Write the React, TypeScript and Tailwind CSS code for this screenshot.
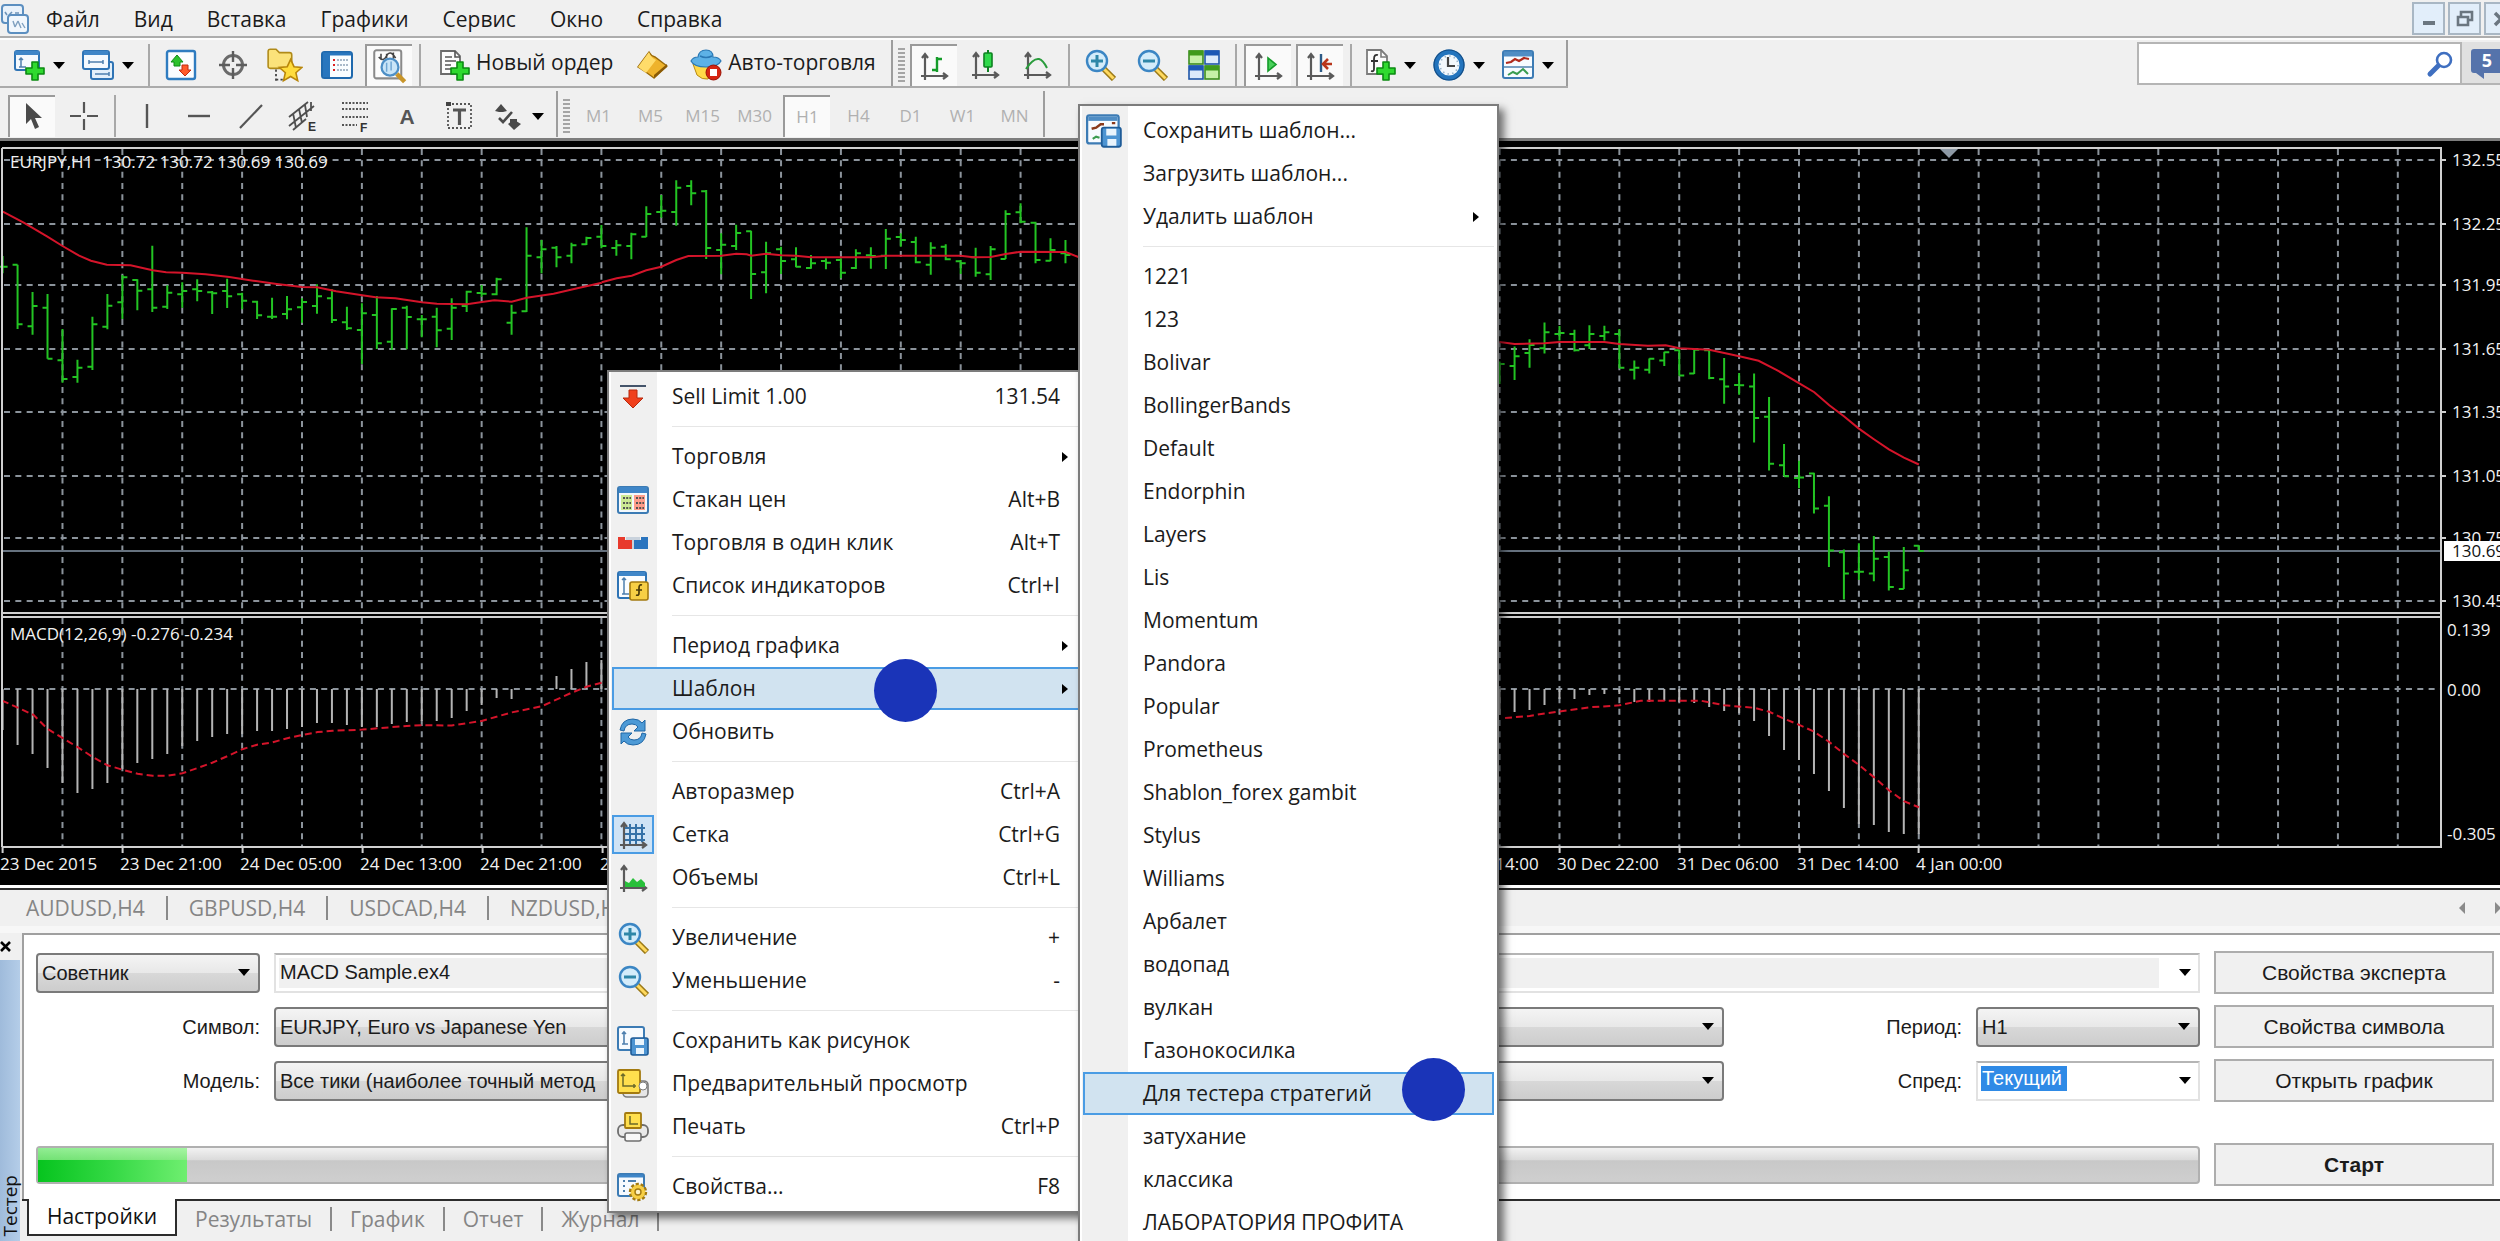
import type { ReactNode } from "react";

/* ------------------------------------------------------------------ */
/* Icons                                                              */
/* ------------------------------------------------------------------ */

function Svg({ children, className = "size-8" }: { children: ReactNode; className?: string }) {
  return (
    <svg viewBox="0 0 32 32" className={className + " shrink-0"} fill="none" aria-hidden="true">
      {children}
    </svg>
  );
}

const Down = () => (
  <svg viewBox="0 0 12 7" className="h-[7px] w-3 shrink-0" aria-hidden="true">
    <path d="M0 0h12L6 7z" fill="#000" />
  </svg>
);

const Plus = () => (
  <path d="M19 13h6v6h6v6h-6v6h-6v-6h-6v-6h6z" fill="#2fd92f" stroke="#0b8a12" strokeWidth="1.6" strokeLinejoin="round" />
);

const NewChartIcon = () => (
  <Svg>
    <rect x="2" y="2" width="24" height="19" rx="2" fill="#f4f9fe" stroke="#2f74b5" strokeWidth="2" />
    <path d="M2 4h24" stroke="#3f86c8" strokeWidth="4" />
    <path d="M8 9v9M6 11l2-2 2 2M6 18h7" stroke="#4d7fae" strokeWidth="1.5" />
    <Plus />
  </Svg>
);
const ProfilesIcon = () => (
  <Svg>
    <rect x="9" y="13" width="22" height="17" rx="2" fill="#e3f0fa" stroke="#2f74b5" strokeWidth="2" />
    <rect x="1" y="2" width="26" height="18" rx="2" fill="#f4f9fe" stroke="#2f74b5" strokeWidth="2" />
    <path d="M2 4h24" stroke="#3f86c8" strokeWidth="4" />
    <path d="M7 13h14M7 11v4M21 11v4M13 25h14M27 23v4" stroke="#4d7fae" strokeWidth="1.5" />
  </Svg>
);
const MarketWatchIcon = () => (
  <Svg>
    <rect x="2" y="2" width="28" height="28" rx="2" fill="#fbfdff" stroke="#2f7cc0" strokeWidth="2.4" />
    <path d="M6 13l6-7 6 7h-3v4H9v-4z" fill="#2cc22c" stroke="#0f8a16" />
    <path d="M14 21l6 6 6-6h-3v-5h-6v5z" fill="#ff5a2a" stroke="#c02a10" />
  </Svg>
);
const CrosshairIcon = () => (
  <Svg>
    <circle cx="16" cy="16" r="9.5" stroke="#6a6a6a" strokeWidth="3" />
    <path d="M16 2v11M16 19v11M2 16h11M19 16h11" stroke="#5d5d5d" strokeWidth="2.4" />
  </Svg>
);
const NavigatorIcon = () => (
  <Svg className="size-9">
    <path d="M1 4q0-2 2-2h5l3 3h9q2 0 2 2v10q0 2-2 2H3q-2 0-2-2z" fill="#fbe27a" stroke="#b08a18" strokeWidth="1.4" />
    <path d="M8 20v10M8 29h6" stroke="#444" strokeWidth="1.6" strokeDasharray="2 2" />
    <path d="M21 11l3 6.5 7 .7-5.300 4.700 1.600 7-6.300-3.700-6.300 3.700 1.600-7-5.300-4.700 7-.7z" fill="#ffdc3c" stroke="#b8860b" strokeWidth="1.4" />
  </Svg>
);
const DataWindowIcon = () => (
  <Svg>
    <rect x="1" y="3" width="30" height="26" rx="2.500" fill="#fafdff" stroke="#1f69ad" strokeWidth="2" />
    <path d="M2 4h7v24H2z" fill="#2876be" />
    <path d="M2 5h28" stroke="#2876be" strokeWidth="3" />
    <path d="M12 11h2M12 16h2M12 21h2" stroke="#d22" strokeWidth="2" />
    <path d="M16 11h12M16 16h12M16 21h12" stroke="#8fa3b8" strokeWidth="1.4" strokeDasharray="2 1" />
  </Svg>
);
const TesterIcon = () => (
  <Svg className="size-9">
    <rect x="2" y="2" width="24" height="25" rx="2" fill="#fcfcfc" stroke="#8a8a8a" strokeWidth="1.8" />
    <path d="M6 8q4 5 7-1t8 2M8 5v5M13 5v4M19 4v6" stroke="#444" strokeWidth="1.4" />
    <circle cx="16" cy="17" r="7.500" fill="#bfe0f7" fillOpacity=".85" stroke="#4d8fc6" strokeWidth="2" />
    <path d="M13 13v8M17 12v8" stroke="#6fa6d3" strokeWidth="1.300" />
    <path d="M22 23l7 7" stroke="#c8952a" strokeWidth="4" />
  </Svg>
);
const NewOrderIcon = () => (
  <Svg>
    <path d="M3 2h14l5 5v18H3z" fill="#fcfcfc" stroke="#6b6b6b" strokeWidth="1.800" />
    <path d="M17 2v6h5M7 8h7M7 12h11M7 16h6M7 20h6" stroke="#555" strokeWidth="1.600" />
    <Plus />
  </Svg>
);
const BookIcon = () => (
  <Svg>
    <path d="M2 18L13 3q2 4 6 5l12 9-13 12q-8-6-16-11z" fill="#eeb32c" stroke="#9a6a08" strokeWidth="1.400" />
    <path d="M13 3q2 6 7 8l-10 13-8-6z" fill="#ffdc6a" />
    <path d="M18 29v-3l13-11v3z" fill="#8a5a06" />
  </Svg>
);
const AutoTradeIcon = () => (
  <Svg>
    <path d="M3 15l4 11q5 5 11 4l9-15z" fill="#ffd948" stroke="#b98a12" />
    <path d="M1 12q2-4 7-4 1-7 8-7t7 7q6 0 8 4-3 6-15 6T1 12z" fill="#5db1e6" stroke="#2a78b4" strokeWidth="1.200" />
    <path d="M10 7q6 3 12 0" stroke="#2a78b4" strokeWidth="1.400" />
    <circle cx="23.500" cy="23.500" r="7.500" fill="#d62412" stroke="#9b1206" />
    <rect x="20" y="20" width="7" height="7" fill="#fff" />
  </Svg>
);
const Axes = () => (
  <path d="M7 4v26M3 26h26M4 8l3-4 3 4M25 23l4 3-4 3" stroke="#5a5a5a" strokeWidth="2.200" />
);
const BarsIcon = () => (
  <Svg><Axes /><path d="M19 7v15M19 9h5M14 20h5" stroke="#159c2a" strokeWidth="2.400" /></Svg>
);
const CandlesIcon = () => (
  <Svg><Axes /><path d="M19 1v22" stroke="#0d8020" strokeWidth="2" /><rect x="15" y="4" width="8" height="14" rx="1" fill="#2fd94a" stroke="#0d8020" strokeWidth="1.600" /></Svg>
);
const LineIcon = () => (
  <Svg><Axes /><path d="M5 20q7-11 13-10 4 1 8 9" stroke="#2a9c3c" strokeWidth="2" /></Svg>
);
const Lens = ({ minus }: { minus?: boolean }) => (
  <Svg>
    <path d="M19 19l11 11" stroke="#9c7a17" strokeWidth="6" />
    <path d="M19.500 19.500l10 10" stroke="#ffd95e" strokeWidth="3" />
    <circle cx="13" cy="12" r="10" fill="#d4ecfa" stroke="#3b86c4" strokeWidth="2.400" />
    <path d={minus ? "M7 12h12" : "M7 12h12M13 6v12"} stroke="#2f87a8" strokeWidth="3" />
  </Svg>
);
const TilesIcon = () => (
  <Svg>
    <rect x="1" y="2" width="14" height="13" fill="#c6f0a8" stroke="#3c8d1e" strokeWidth="1.600" />
    <rect x="17" y="2" width="14" height="13" fill="#dceafb" stroke="#1f55a8" strokeWidth="1.600" />
    <rect x="1" y="17" width="14" height="13" fill="#dceafb" stroke="#1f55a8" strokeWidth="1.600" />
    <rect x="17" y="17" width="14" height="13" fill="#c6f0a8" stroke="#3c8d1e" strokeWidth="1.600" />
    <path d="M1 4h14M17 19h14" stroke="#3f9a1c" strokeWidth="5" />
    <path d="M17 4h14M1 19h14" stroke="#1d58b5" strokeWidth="5" />
  </Svg>
);
const ScrollIcon = () => (
  <Svg><Axes /><path d="M16 8v13l8-6.500z" fill="#49d05a" stroke="#159c2a" strokeWidth="1.600" /></Svg>
);
const ShiftIcon = () => (
  <Svg><Axes /><path d="M17 4v18" stroke="#2c5a86" strokeWidth="2.400" /><path d="M28 14h-8M24 9l-5 5 5 5" stroke="#b8361c" strokeWidth="2.600" /></Svg>
);
const IndicatorsIcon = () => (
  <Svg>
    <path d="M3 1h14l6 6v18H3z" fill="#fcfcfc" stroke="#7b7b7b" strokeWidth="1.800" />
    <path d="M17 1v7h6" stroke="#7b7b7b" strokeWidth="1.600" />
    <path d="M14 6q-4-1-4 4v10q0 3-3 2M7 12h7" stroke="#333" strokeWidth="1.800" />
    <Plus />
  </Svg>
);
const ClockIcon = () => (
  <Svg>
    <circle cx="16" cy="16" r="13" fill="#f3f8fc" stroke="#2374bd" strokeWidth="5" />
    <circle cx="16" cy="16" r="15" stroke="#154e86" strokeWidth="1.200" />
    <path d="M15 8v9h7" stroke="#444" strokeWidth="2.200" />
    <circle cx="16" cy="16" r="9" stroke="#9ab4cb" strokeWidth="1.600" strokeDasharray="1.500 3.200" />
  </Svg>
);
const TemplateIcon = () => (
  <Svg>
    <rect x="1" y="2" width="30" height="27" rx="2" fill="#f7fbff" stroke="#3c7bb4" strokeWidth="2" />
    <path d="M2 5h28" stroke="#4f8dc4" strokeWidth="5" />
    <path d="M2 18h28" stroke="#5b8ab5" strokeWidth="1.600" />
    <path d="M4 14l5-1 4-3 4 2 5-3 5 1" stroke="#b02a1c" strokeWidth="2.200" />
    <path d="M6 26l5-3 4 2 6-5 5 5" stroke="#3a9c50" strokeWidth="2" />
  </Svg>
);
const CursorIcon = () => (
  <Svg><path d="M9 2v21l5-5 4 10 4-2-4-9h7z" fill="#4a4a4a" /></Svg>
);
const CrossIcon = () => (
  <Svg><path d="M16 2v11M16 19v11M2 16h11M19 16h11" stroke="#555" strokeWidth="2.200" /></Svg>
);
const VLineIcon = () => <Svg><path d="M16 4v24" stroke="#555" strokeWidth="2.400" /></Svg>;
const HLineIcon = () => <Svg><path d="M5 16h22" stroke="#555" strokeWidth="2.400" /></Svg>;
const TrendIcon = () => <Svg><path d="M5 28L27 5" stroke="#555" strokeWidth="2.200" /></Svg>;
const ChannelIcon = () => (
  <Svg>
    <path d="M2 17L21 2M2 26L27 6M6 30l13-11M6 13l3 15M12 9l3 14M18 5l2 12M24 2v9" stroke="#4f4f4f" strokeWidth="1.800" />
    <text x="21" y="31" fontSize="12" fontWeight="700" fill="#333" fontFamily="Liberation Sans, sans-serif">E</text>
  </Svg>
);
const FiboIcon = () => (
  <Svg>
    <path d="M3 3h26M3 9h26M3 17h26M3 25h15" stroke="#555" strokeWidth="2" strokeDasharray="2 1.500" />
    <text x="21" y="32" fontSize="12" fontWeight="700" fill="#333" fontFamily="Liberation Sans, sans-serif">F</text>
  </Svg>
);
const TextIcon = () => (
  <Svg><text x="16" y="24" textAnchor="middle" fontSize="21" fontWeight="700" fill="#555" fontFamily="Liberation Sans, sans-serif">A</text></Svg>
);
const LabelIcon = () => (
  <Svg>
    <rect x="5" y="4" width="23" height="24" stroke="#555" strokeWidth="1.800" strokeDasharray="2 2" />
    <path d="M3 2h5v4H3z" fill="#444" />
    <path d="M10 10h13M16.500 10v15" stroke="#555" strokeWidth="3.200" />
  </Svg>
);
const ArrowsIcon = () => (
  <Svg>
    <path d="M3 11l6-7 6 7-4 1H7z" fill="#4a4a4a" />
    <path d="M16 24l6 6 7-6-5-3h-4z" fill="#4a4a4a" />
    <path d="M7 18l4 4 9-10" stroke="#4a4a4a" strokeWidth="2.600" />
    <path d="M18 19h7v5h-7z" fill="#4a4a4a" />
  </Svg>
);

/* Menu icons */
const SellLimitIcon = () => (
  <Svg>
    <path d="M3 5h26" stroke="#44546a" strokeWidth="2" />
    <path d="M12 9h8v8h6L16 27 6 17h6z" fill="#f0401c" stroke="#b8280c" />
  </Svg>
);
const DepthIcon = () => (
  <Svg>
    <rect x="1" y="3" width="30" height="26" rx="2" fill="#f3f8fc" stroke="#3c7bb4" strokeWidth="2" />
    <path d="M2 6h28" stroke="#3f86c8" strokeWidth="6" />
    <path d="M4 11h11v15H4z" fill="#cdeb94" />
    <path d="M17 11h11v15H17z" fill="#ff9d8a" />
    <path d="M6 14h8M6 19h8M6 24h8M19 14h8M19 19h8M19 24h8" stroke="#555" strokeWidth="2" strokeDasharray="2 1.200" />
  </Svg>
);
const OneClickIcon = () => (
  <Svg>
    <path d="M1 10h7v3h7v9H1z" fill="#e83a2c" />
    <path d="M31 10h-7v3h-7v9h14z" fill="#2a74be" />
    <path d="M9 10h14v3H9zM15 13h2v9h-2z" fill="#c9d2dc" />
  </Svg>
);
const IndicatorListIcon = () => (
  <Svg>
    <rect x="1" y="2" width="28" height="26" rx="2" fill="#fbfdff" stroke="#2f74b5" strokeWidth="2" />
    <path d="M2 4h26" stroke="#3f86c8" strokeWidth="4" />
    <path d="M7 8v16M5 10l2-2 2 2M5 24h7" stroke="#4d7fae" strokeWidth="1.500" />
    <rect x="13" y="12" width="18" height="18" rx="2" fill="#f7cf45" stroke="#a37a10" strokeWidth="1.600" />
    <path d="M25 15q-3-1-3 3v5q0 3-3 2M19 20h6" stroke="#4a3a08" strokeWidth="1.700" />
  </Svg>
);
const RefreshIcon = () => (
  <Svg>
    <path d="M3 14Q5 3 16 3q6 0 9 4l3-3v11H17l4-4q-2-3-6-3-7 0-8 7z" fill="#4d9ad6" stroke="#1f66a5" />
    <path d="M29 18q-2 11-13 11-6 0-9-4l-3 3V17h11l-4 4q2 3 6 3 7 0 8-7z" fill="#4d9ad6" stroke="#1f66a5" />
  </Svg>
);
const GridIcon = () => (
  <Svg><Axes /><path d="M13 5v20M19 5v20M25 5v18M8 9h20M8 15h20M8 21h20" stroke="#3572a8" strokeWidth="2" /></Svg>
);
const VolumesIcon = () => (
  <Svg><Axes /><path d="M8 25v-6l4 2 4-5 4 4 4-3 4 4v4z" fill="#28c03a" /></Svg>
);
const Floppy = () => (
  <>
    <rect x="14" y="13" width="17" height="17" rx="2" fill="#4d94d2" stroke="#1f5c98" strokeWidth="1.600" />
    <path d="M18 14h9v6h-9zM19 23h8v6h-8z" fill="#eaf4fc" />
  </>
);
const SavePictureIcon = () => (
  <Svg>
    <rect x="1" y="2" width="26" height="23" rx="2" fill="#f6fafe" stroke="#3c7bb4" strokeWidth="2" />
    <path d="M7 7v12M5 9l2-2 2 2M5 19h6" stroke="#4d7fae" strokeWidth="1.600" />
    <Floppy />
  </Svg>
);
const PreviewIcon = () => (
  <Svg>
    <rect x="6" y="13" width="25" height="16" rx="4" fill="#e6e6e6" stroke="#7b7b7b" strokeWidth="1.600" />
    <rect x="1" y="2" width="22" height="23" rx="1.500" fill="#ffdf4e" stroke="#a37a10" strokeWidth="1.800" />
    <path d="M6 6v12h13M4 8l2-2 2 2M17 16v4" stroke="#6b6a2a" strokeWidth="1.500" />
    <circle cx="26" cy="18" r="4" fill="#fff" stroke="#7b7b7b" />
  </Svg>
);
const PrintIcon = () => (
  <Svg>
    <rect x="1" y="14" width="30" height="12" rx="5" fill="#e9e9e9" stroke="#6f6f6f" strokeWidth="1.800" />
    <rect x="8" y="2" width="16" height="15" rx="1" fill="#ffdf4e" stroke="#a37a10" strokeWidth="1.800" />
    <path d="M13 5v8h8" stroke="#6b6a2a" strokeWidth="1.500" />
    <rect x="8" y="22" width="16" height="8" rx="2" fill="#f8f8f8" stroke="#6f6f6f" strokeWidth="1.600" />
  </Svg>
);
const PropertiesIcon = () => (
  <Svg>
    <rect x="1" y="3" width="26" height="22" rx="2" fill="#f6fafe" stroke="#3c7bb4" strokeWidth="2" />
    <path d="M2 5h24" stroke="#3f86c8" strokeWidth="3" />
    <path d="M6 10h2M6 15h2M6 20h2M11 10h8" stroke="#4d7fae" strokeWidth="2" />
    <circle cx="21" cy="21" r="7.500" fill="#f7cf45" stroke="#a37a10" strokeWidth="3.400" strokeDasharray="3 1.700" />
    <circle cx="21" cy="21" r="7" fill="#f7cf45" />
    <circle cx="21" cy="21" r="3" fill="#fdf3c8" stroke="#a37a10" strokeWidth="1.400" />
  </Svg>
);
const SaveTemplateIcon = () => (
  <Svg className="size-9">
    <rect x="1" y="2" width="28" height="25" rx="2" fill="#f7fbff" stroke="#3c7bb4" strokeWidth="2" />
    <path d="M2 5h26" stroke="#4f8dc4" strokeWidth="4" />
    <path d="M5 14l4-1 4-3h3M23 9h3" stroke="#8a3a1c" strokeWidth="2.200" />
    <path d="M6 23l3-2 3 1" stroke="#3a9c50" strokeWidth="2" />
    <Floppy />
  </Svg>
);

/* ------------------------------------------------------------------ */
/* Menu bar and toolbars                                              */
/* ------------------------------------------------------------------ */

const MENUS = ["Файл", "Вид", "Вставка", "Графики", "Сервис", "Окно", "Справка"];

function MenuBar() {
  return (
    <header className="flex h-10 shrink-0 items-start border-b-2 border-[#fdfdfd] bg-[#f0f0f0] shadow-[inset_0_-2px_0_#adadad]">
      <svg viewBox="0 0 30 34" className="mt-[3px] h-[34px] w-[30px] shrink-0" fill="none" aria-hidden="true">
        <rect x="2" y="2" width="21" height="18" rx="3" fill="#e9f2fb" stroke="#5c8fc0" strokeWidth="2" />
        <path d="M5 9l2 3M9 12l3-3M15 10h4" stroke="#6d93b8" strokeWidth="1.600" />
        <rect x="8" y="12" width="20" height="18" rx="3" fill="#f1f7fd" stroke="#5c8fc0" strokeWidth="2" />
        <path d="M13 18l2 6M15 24l3-6M18 18l3 7M22 20l3 5" stroke="#7fa0c0" strokeWidth="1.400" />
      </svg>
      <nav className="flex h-[38px] items-center pl-px">
        {MENUS.map((m) => (
          <button key={m} type="button" className="px-[17px] text-[21px] leading-7 text-[#1b1b1b] first:pl-[15px]">
            {m}
          </button>
        ))}
      </nav>
      <div className="-mr-[17px] ml-auto flex gap-[3px] pt-0.5">
        {["Свернуть", "Восстановить", "Закрыть"].map((label, i) => (
          <button
            key={label}
            type="button"
            aria-label={label}
            className="flex h-[33px] w-[33px] items-center justify-center border-2 border-[#a9b7c4] bg-[#e2eefa]"
          >
            <svg viewBox="0 0 20 20" className="size-5" fill="none" stroke="#6b7680" strokeWidth="2.600">
              {i === 0 && <path d="M4 14h12" strokeWidth="4" />}
              {i === 1 && <path d="M6 7V3h11v8h-4M3 8h10v8H3z" />}
              {i === 2 && <path d="M4 4l12 12M16 4L4 16" strokeWidth="3.500" />}
            </svg>
          </button>
        ))}
      </div>
    </header>
  );
}

const Sep = () => <span className="mx-0.5 h-full w-0.5 shrink-0 bg-[#a8a8a8]" />;
const Edge = () => <span className="-mt-1 w-0.5 shrink-0 self-stretch bg-[#9d9d9d]" />;
const Grip = () => (
  <span className="my-1 w-[7px] shrink-0 self-stretch bg-[repeating-linear-gradient(#a5a5a5_0_2px,#f0f0f0_2px_4px)]" />
);

function Tool({ label, pressed, children }: { label: string; pressed?: boolean; children: ReactNode }) {
  return (
    <button
      type="button"
      aria-label={label}
      aria-pressed={pressed}
      className={
        "flex h-full w-[47px] shrink-0 items-center justify-center " +
        (pressed ? "border-t-2 border-l-2 border-[#9a9a9a] bg-[#fafafa]" : "")
      }
    >
      {children}
    </button>
  );
}

function DropTool({ label, children }: { label: string; children: ReactNode }) {
  return (
    <button type="button" aria-label={label} className="flex h-full w-16 shrink-0 items-center gap-2 pl-[5px]">
      {children}
      <Down />
    </button>
  );
}

const WideTool = ({ icon, children }: { icon: ReactNode; children: ReactNode }) => (
  <button type="button" className="flex h-full shrink-0 items-center gap-1.5 px-2.5 text-[21px] text-[#1b1b1b]">
    {icon}
    <span className="pb-1">{children}</span>
  </button>
);

function MainToolbar() {
  return (
    <div className="flex h-12 shrink-0 bg-[#f0f0f0]">
      <div className="flex items-center gap-[5px] border-b-2 border-[#ababab] pt-1 pl-2">
        <DropTool label="Новый график"><NewChartIcon /></DropTool>
        <DropTool label="Профили"><ProfilesIcon /></DropTool>
        <Sep />
        <Tool label="Обзор рынка"><MarketWatchIcon /></Tool>
        <Tool label="Окно данных"><CrosshairIcon /></Tool>
        <Tool label="Навигатор"><NavigatorIcon /></Tool>
        <Tool label="Терминал"><DataWindowIcon /></Tool>
        <Tool label="Тестер стратегий" pressed><TesterIcon /></Tool>
        <Sep />
        <WideTool icon={<NewOrderIcon />}>Новый ордер</WideTool>
        <Tool label="Редактор"><BookIcon /></Tool>
        <WideTool icon={<AutoTradeIcon />}>Авто-торговля</WideTool>
        <Edge />
        <Grip />
        <Tool label="Бары" pressed><BarsIcon /></Tool>
        <Tool label="Свечи"><CandlesIcon /></Tool>
        <Tool label="Линия"><LineIcon /></Tool>
        <Sep />
        <Tool label="Увеличить"><Lens /></Tool>
        <Tool label="Уменьшить"><Lens minus /></Tool>
        <Tool label="Окна рядом"><TilesIcon /></Tool>
        <Sep />
        <Tool label="Автопрокрутка" pressed><ScrollIcon /></Tool>
        <Tool label="Сдвиг графика" pressed><ShiftIcon /></Tool>
        <Sep />
        <DropTool label="Индикаторы"><IndicatorsIcon /></DropTool>
        <DropTool label="Периоды"><ClockIcon /></DropTool>
        <DropTool label="Шаблоны"><TemplateIcon /></DropTool>
        <Edge />
      </div>
      <div className="ml-auto flex h-[45px] w-[363px] items-stretch pt-0.5">
        <label className="flex w-[325px] items-center border-2 border-[#b5b5b5] bg-white pr-1.5">
          <input type="text" aria-label="Поиск" className="min-w-0 flex-1 px-2 text-[20px] outline-none" />
          <svg viewBox="0 0 28 28" className="size-7" fill="none" stroke="#3f6fc0" aria-hidden="true">
            <circle cx="18" cy="10" r="7" strokeWidth="2.600" />
            <path d="M12 16l-8 8" strokeWidth="5" strokeLinecap="round" />
          </svg>
        </label>
        <button type="button" className="flex flex-1 items-start justify-end border-b-2 border-[#b5b5b5] bg-[#e0e0e0] pt-[7px]">
          <svg viewBox="0 0 29 30" className="h-[30px] w-[29px]" aria-hidden="true">
            <path d="M3 0h26v24H13v6l-8-6H3q-3 0-3-3V3q0-3 3-3z" fill="#5573ab" />
            <text x="16" y="18" textAnchor="middle" fontSize="18" fontWeight="700" fill="#fff">5</text>
          </svg>
        </button>
      </div>
    </div>
  );
}

const FRAMES = ["M1", "M5", "M15", "M30", "H1", "H4", "D1", "W1", "MN"];

function LineToolbar() {
  return (
    <div className="flex h-[53px] shrink-0 border-b-[3px] border-[#7d7d7d] bg-[#f0f0f0]">
      <div className="flex items-center gap-[5px] pt-[7px] pb-px pl-2">
        <Tool label="Курсор" pressed><CursorIcon /></Tool>
        <Tool label="Перекрестие"><CrossIcon /></Tool>
        <Sep />
        <Tool label="Вертикальная линия"><VLineIcon /></Tool>
        <Tool label="Горизонтальная линия"><HLineIcon /></Tool>
        <Tool label="Трендовая линия"><TrendIcon /></Tool>
        <Tool label="Канал"><ChannelIcon /></Tool>
        <Tool label="Фибоначчи"><FiboIcon /></Tool>
        <Tool label="Текст"><TextIcon /></Tool>
        <Tool label="Метка"><LabelIcon /></Tool>
        <DropTool label="Стрелки"><ArrowsIcon /></DropTool>
        <Edge />
        <Grip />
        {FRAMES.map((f) => (
          <button
            key={f}
            type="button"
            className={
              "h-full w-[47px] text-[17px] text-[#b0b0b0] " +
              (f === "H1" ? "border-t-2 border-l-2 border-[#9a9a9a] bg-[#fafafa]" : "")
            }
          >
            {f}
          </button>
        ))}
        <Edge />
      </div>
    </div>
  );
}

/* ------------------------------------------------------------------ */
/* Chart                                                              */
/* ------------------------------------------------------------------ */

const STEP = 14.97;
const barX = (i: number) => 2.6 + i * STEP;

/* Each block: first bar index, pixels per unit, top of the block, rows of [high, low, open, close]. */
const BAR_BLOCKS: { first: number; unit: number; top: number; rows: number[][] }[] = [
  {
    first: 0, unit: 3, top: -1,
    rows: [
      [348, 400, 380, 380], [374, 567, 374, 553], [456, 584, 559, 498], [462, 656, 503, 656], [567, 728, 661, 717],
      [659, 728, 711, 683], [530, 690, 680, 553], [462, 568, 560, 497], [405, 537, 487, 412], [418, 511, 420, 452],
      [317, 516, 448, 503], [436, 507, 500, 458], [427, 503, 463, 453], [418, 484, 448, 453], [453, 522, 457, 460],
      [416, 504, 453, 469], [458, 508, 463, 482], [482, 537, 485, 526], [473, 537, 530, 530], [468, 538, 522, 508],
      [475, 548, 502, 486], [433, 521, 498, 469], [448, 549, 475, 540], [500, 570, 547, 565], [490, 672, 570, 520],
      [468, 627, 525, 610], [505, 630, 605, 507], [497, 628, 503, 531], [525, 592, 538, 538], [503, 622, 530, 571],
      [475, 600, 566, 503], [452, 516, 498, 455], [435, 470, 459, 461], [413, 466, 463, 418], [494, 584, 548, 518],
      [262, 516, 514, 347], [300, 400, 352, 328], [318, 382, 323, 352], [308, 370, 347, 316], [290, 315, 313, 294],
      [255, 325, 290, 318], [300, 347, 324, 316], [278, 358, 318, 283], [199, 291, 290, 222], [165, 233, 216, 212],
      [121, 257, 216, 143], [121, 196, 138, 160], [150, 357, 154, 324], [280, 403, 330, 314], [254, 330, 318, 279],
      [272, 477, 274, 402], [305, 460, 397, 340], [320, 402, 328, 363], [322, 382, 358, 380], [345, 386, 384, 370],
      [355, 388, 363, 368], [355, 415, 360, 398], [328, 387, 384, 340], [322, 386, 346, 348], [267, 387, 347, 296],
      [280, 320, 291, 300], [290, 370, 306, 367], [307, 404, 374, 323], [313, 361, 320, 358], [360, 402, 364, 370],
      [323, 410, 352, 398], [318, 420, 403, 328], [211, 357, 357, 222], [190, 250, 217, 245], [245, 370, 248, 360],
      [295, 363, 362, 330], [300, 370, 340, 345],
    ],
  },
  {
    first: 100, unit: 2.45, top: 139,
    rows: [
      [200, 255, 206, 206], [163, 245, 211, 187], [145, 215, 179, 159], [104, 180, 167, 128], [113, 148, 132, 130],
      [122, 175, 132, 172], [111, 169, 160, 132], [112, 148, 137, 128], [120, 216, 132, 215], [197, 244, 220, 215],
      [192, 229, 220, 193], [176, 211, 197, 177], [170, 234, 172, 234], [170, 230, 229, 171], [170, 243, 172, 240],
      [191, 303, 243, 261], [228, 281, 257, 258], [229, 398, 261, 338], [287, 467, 335, 450], [402, 480, 454, 481],
      [443, 510, 485, 484], [472, 572, 474, 560], [530, 703, 553, 663], [660, 783, 667, 719], [645, 735, 715, 715],
      [627, 738, 719, 683], [665, 761, 679, 752], [654, 757, 757, 711], [650, 662, 651, 664],
    ],
  },
];

const barsPath = BAR_BLOCKS.map(({ first, unit, top, rows }) =>
  rows
    .map(([h, l, o, c], i) => {
      const x = barX(first + i);
      const y = (v: number) => (top + v / unit).toFixed(1);
      return `M${x} ${y(h)}V${y(l)}M${x - 5} ${y(o)}H${x}M${x} ${y(c)}H${x + 5}`;
    })
    .join(""),
).join("");

const curve = (points: number[][], x0: number, kx: number, y0: number, ky: number) =>
  points.map(([x, y]) => `${(x0 + x / kx).toFixed(1)},${(y0 + y / ky).toFixed(1)}`).join(" ");

const MA_LEFT = curve(
  [[7, 215], [60, 248], [120, 290], [158, 318], [200, 347], [230, 362], [270, 374], [330, 376], [386, 391], [420, 397],
   [461, 398], [520, 403], [580, 411], [640, 422], [700, 432], [764, 441], [802, 442], [850, 454], [916, 466], [950, 472],
   [1000, 475], [1067, 487], [1105, 491], [1181, 493], [1219, 486], [1250, 481], [1294, 485], [1332, 473], [1400, 461],
   [1460, 445], [1522, 428]], 0, 2.529, -1, 3);
const MA_MID = curve(
  [[5, 427], [50, 415], [95, 407], [139, 391], [184, 380], [229, 360], [265, 348], [364, 347], [409, 341], [440, 343],
   [454, 347], [499, 341], [543, 346], [588, 347], [633, 352], [813, 352], [858, 347], [1082, 347], [1120, 352],
   [1172, 351], [1217, 342], [1262, 335], [1397, 336], [1437, 352]], 600, 3, -1, 3);
const MA_RIGHT = curve(
  [[55, 152], [97, 157], [181, 155], [223, 152], [348, 152], [390, 157], [470, 161], [520, 160], [558, 167], [642, 171],
   [684, 179], [726, 187], [780, 198], [830, 220], [894, 253], [936, 275], [978, 307], [1019, 334], [1061, 364],
   [1103, 390], [1145, 415], [1187, 435], [1229, 452]], 1480, 2.8, 139, 2.45);
const SIGNAL_LEFT = curve(
  [[5, 246], [45, 264], [82, 281], [116, 315], [153, 337], [190, 360], [226, 383], [263, 404], [300, 415], [337, 425],
   [374, 430], [410, 430], [447, 424], [484, 411], [520, 398], [557, 382], [594, 365], [630, 354], [668, 348], [704, 338],
   [741, 330], [778, 323], [815, 320], [888, 317], [960, 311], [1034, 306], [1107, 307], [1180, 296], [1254, 275],
   [1327, 260], [1400, 227], [1437, 212], [1475, 202]], 0, 2.45, 459, 2.446);
const SIGNAL_RIGHT = curve(
  [[70, 1073], [139, 1068], [181, 1062], [223, 1057], [307, 1047], [390, 1042], [450, 1031], [620, 1031], [684, 1042],
   [768, 1048], [810, 1058], [852, 1075], [894, 1090], [936, 1107], [978, 1132], [1019, 1161], [1061, 1188],
   [1103, 1218], [1145, 1250], [1187, 1277], [1229, 1292]], 1480, 2.8, 139, 2.45);

const ZERO = 548;
/* Histogram lengths in pixels below the zero line; negative values rise above it. */
const MACD_LEFT = [41, 56, 65, 79, 94, 104, 100, 94, 80, 74, 70, 65, 57, 52, 48, 45, 45, 42, 42, 40, 38, 34, 34, 36, 38, 38,
  35, 33, 32, 32, 29, 22, 16, 9, 10, 0, 0, -13, -20, -27, -29];
const MACD_RIGHT = [26, 23, 21, 16, 10, 10, 6, 5, 5, 13, 13, 12, 13, 14, 18, 22, 24, 32, 47, 61, 71, 85, 102, 119, 135, 136,
  143, 145, 145];
const histogram = (first: number, values: number[]) =>
  values.map((v, i) => `M${barX(first + i)} ${ZERO}v${v}`).join("");

const PRICES: [string, number][] = [
  ["132.55", 19], ["132.25", 83], ["131.95", 144], ["131.65", 208], ["131.35", 271], ["131.05", 335], ["130.75", 397], ["130.45", 460],
];
const DATES: [string, number][] = [
  ["23 Dec 2015", 0], ["23 Dec 21:00", 120], ["24 Dec 05:00", 240], ["24 Dec 13:00", 360], ["24 Dec 21:00", 480],
  ["28 Dec 05:00", 600], ["30 Dec 14:00", 1437], ["30 Dec 22:00", 1557], ["31 Dec 06:00", 1677], ["31 Dec 14:00", 1797],
  ["4 Jan 00:00", 1916],
];
const COLUMNS = Array.from({ length: 40 }, (_, i) => 2.6 + (i + 1) * 59.88);

function Chart() {
  return (
    <section aria-label="EURJPY,H1" className="shrink-0 bg-black">
      <svg viewBox="0 0 2500 744" className="block h-auto w-full font-['Open_Sans',sans-serif] text-[17px]" fill="none">
        <g stroke="#8b939b" strokeWidth="2" strokeDasharray="6 5.330">
          {COLUMNS.map((x) => <path key={x} d={`M${x} 8V471M${x} 477V705`} />)}
          {PRICES.map(([p, y]) => <path key={p} d={`M4 ${y}H2440`} />)}
          <path d={`M4 ${ZERO}H2440`} />
        </g>
        <path d="M2 410H2441" stroke="#66727f" strokeWidth="2" />
        <path d={histogram(0, MACD_LEFT) + histogram(100, MACD_RIGHT)} stroke="#b4b4b4" strokeWidth="2" />
        <g stroke="#d4142a" strokeWidth="2">
          <polyline points={SIGNAL_LEFT} strokeDasharray="7 4" />
          <polyline points={SIGNAL_RIGHT} strokeDasharray="7 4" />
        </g>
        <path d={barsPath} stroke="#23c423" strokeWidth="2" />
        <g stroke="#d4142a" strokeWidth="2">
          <polyline points={MA_LEFT} />
          <polyline points={MA_MID} />
          <polyline points={MA_RIGHT} />
        </g>
        <g stroke="#d0d0d0" strokeWidth="2">
          <path d="M2 7H2442M2 472H2442M2 476H2442M2 706H2442M2 7V706M2441 7V706" />
          {PRICES.map(([p, y]) => <path key={p} d={`M2441 ${y}h5`} />)}
          {DATES.map(([d, x]) => <path key={d} d={`M${x + 2.600} 706v6`} />)}
        </g>
        <path d="M1940 8h18l-9 9z" fill="#8d99a5" />
        <g fill="#f2f2f2">
          <text x="10" y="27">{"EURJPY,H1\u00a0\u00a0130.72 130.72 130.69 130.69"}</text>
          <text x="10" y="499">MACD(12,26,9) -0.276 -0.234</text>
          {PRICES.map(([p, y]) => <text key={p} x="2452" y={y + 6}>{p}</text>)}
          <text x="2447" y="495">0.139</text>
          <text x="2447" y="555">0.00</text>
          <text x="2447" y="699">-0.305</text>
          {DATES.map(([d, x]) => <text key={d} x={x} y="729">{d}</text>)}
        </g>
        <rect x="2444" y="400" width="56" height="20" fill="#fff" />
        <text x="2452" y="416" fill="#111">130.69</text>
      </svg>
    </section>
  );
}

/* ------------------------------------------------------------------ */
/* Chart tabs and tester panel                                        */
/* ------------------------------------------------------------------ */

const CHART_TABS = ["AUDUSD,H4", "GBPUSD,H4", "USDCAD,H4", "NZDUSD,H4"];

function ChartTabs() {
  return (
    <div className="flex h-[48px] shrink-0 flex-col border-t-[3px] border-white bg-[#f7f7f7]">
      <div className="flex h-[38px] items-center border-t-2 border-[#2c2c2c] bg-[#f0f0f0] pl-[5px] text-[21px] text-[#858585]">
        {CHART_TABS.map((t) => (
          <button key={t} type="button" className="border-r-2 border-[#8a8a8a] px-[21px] leading-6">
            {t}
          </button>
        ))}
        <div className="-mr-0.5 ml-auto flex gap-7">
          <button type="button" aria-label="Назад"><svg viewBox="0 0 8 12" className="h-3 w-2"><path d="M7 0v12L1 6z" fill="#8a8a8a" /></svg></button>
          <button type="button" aria-label="Вперед"><svg viewBox="0 0 8 12" className="h-3 w-2"><path d="M1 0v12l6-6z" fill="#8a8a8a" /></svg></button>
        </div>
      </div>
    </div>
  );
}

function Select({ id, value, className }: { id: string; value: string; className: string }) {
  return (
    <span className={"relative flex h-10 items-center " + className}>
      <select
        id={id}
        aria-label={value}
        defaultValue={value}
        className="h-full w-full appearance-none rounded border-2 border-[#7a7a7a] bg-[linear-gradient(#f4f4f4,#e8e8e8_50%,#d8d8d8_50%,#cdcdcd)] pr-10 pl-1 text-[20px] text-[#1b1b1b]"
      >
        <option>{value}</option>
      </select>
      <span className="pointer-events-none absolute right-2.5"><Down /></span>
    </span>
  );
}

const PanelButton = ({ bold, children }: { bold?: boolean; children: ReactNode }) => (
  <button
    type="button"
    className={"h-[43px] w-[280px] shrink-0 border-2 border-[#adadad] bg-[#f0f0f0] text-[21px] text-[#1b1b1b] " + (bold ? "font-bold" : "")}
  >
    {children}
  </button>
);

const Row = ({ children }: { children: ReactNode }) => <div className="flex h-[43px] items-center gap-3.5">{children}</div>;

const TESTER_TABS = ["Результаты", "График", "Отчет", "Журнал"];

function TesterPanel() {
  return (
    <section aria-label="Тестер" className="flex min-h-0 flex-1 bg-[#f0f0f0]">
      <aside className="flex w-5 shrink-0 flex-col">
        <button type="button" aria-label="Закрыть" className="flex h-[27px] items-center">
          <svg viewBox="0 0 14 14" className="size-3.5"><path d="M1 2l9 9M10 2l-9 9" stroke="#000" strokeWidth="2.600" /></svg>
        </button>
        <div className="flex flex-1 flex-col items-center justify-end bg-[linear-gradient(90deg,#9fbbdb,#b4cde8)] pb-[5px]">
          <span className="rotate-180 text-[19px] leading-5 text-[#111] [writing-mode:vertical-rl]">Тестер</span>
        </div>
      </aside>
      <div className="ml-0.5 flex min-w-0 flex-1 flex-col">
        <form className="flex flex-col gap-[11px] border-t-2 border-l-2 border-[#a0a0a0] bg-white pt-4 pr-1.5 pb-[13px] pl-3 font-['Liberation_Sans',Arial,sans-serif] text-[20px] text-[#1b1b1b]">
          <Row>
            <Select id="kind" value="Советник" className="w-56" />
            <span className="flex h-10 min-w-0 flex-1 items-center border-2 border-[#e2e2e2] border-t-[#b5b5b5] bg-white p-[3px]">
              <input
                type="text"
                aria-label="Советник"
                defaultValue="MACD Sample.ex4"
                className="h-full min-w-0 flex-1 bg-[#f0f0f0] px-px outline-none"
              />
              <button type="button" aria-label="Выбрать советник" className="flex w-9 justify-end pr-1"><Down /></button>
            </span>
            <PanelButton>Свойства эксперта</PanelButton>
          </Row>
          <Row>
            <label htmlFor="symbol" className="w-56 text-right">Символ:</label>
            <Select id="symbol" value="EURJPY, Euro vs Japanese Yen" className="min-w-0 flex-1" />
            <label htmlFor="period" className="w-56 text-right">Период:</label>
            <Select id="period" value="H1" className="w-56" />
            <PanelButton>Свойства символа</PanelButton>
          </Row>
          <Row>
            <label htmlFor="model" className="w-56 text-right">Модель:</label>
            <Select id="model" value="Все тики (наиболее точный метод" className="min-w-0 flex-1" />
            <label htmlFor="spread" className="w-56 text-right">Спред:</label>
            <span className="flex h-10 w-56 items-start border-2 border-[#e2e2e2] border-t-[#b5b5b5] bg-white p-[3px]">
              <input id="spread" type="text" defaultValue="Текущий" className="h-[25px] w-[86px] bg-[#2f8ae6] px-px text-white outline-none" />
              <button type="button" aria-label="Выбрать спред" className="flex h-full flex-1 items-center justify-end pr-1"><Down /></button>
            </span>
            <PanelButton>Открыть график</PanelButton>
          </Row>
          <div className="mt-[30px]">
            <Row>
              <div
                role="progressbar"
                aria-label="Ход тестирования"
                aria-valuenow={7}
                className="h-[38px] min-w-0 flex-1 rounded-sm border-2 border-[#b0b0b0] bg-[linear-gradient(#f2f2f2,#dadada_36%,#c8c8c8_37%,#cfcfcf)]"
              >
                <div
                  className="h-full bg-[linear-gradient(#b4f7b0cc,#8ee98acc_34%,transparent_35%),linear-gradient(90deg,#06c41e,#35d945_50%,#6fee70)]"
                  style={{ width: "6.9%" }}
                />
              </div>
              <PanelButton bold>Старт</PanelButton>
            </Row>
          </div>
        </form>
        <div className="flex flex-1 items-start border-t-2 border-[#2c2c2c] pl-[5px] text-[21px] text-[#858585]">
          <button type="button" className="-mt-0.5 h-[37px] w-[150px] border-2 border-t-0 border-[#2c2c2c] bg-white text-[#111]">
            Настройки
          </button>
          <div className="flex pt-1.5">
            {TESTER_TABS.map((t) => (
              <button key={t} type="button" className="border-r-2 border-[#8a8a8a] px-[18px] leading-6">
                {t}
              </button>
            ))}
          </div>
        </div>
      </div>
    </section>
  );
}

/* ------------------------------------------------------------------ */
/* Menus                                                              */
/* ------------------------------------------------------------------ */

type Item = { text: string; keys?: string; sub?: boolean; icon?: ReactNode; active?: boolean; checked?: boolean };

const CONTEXT_GROUPS: Item[][] = [
  [{ text: "Sell Limit 1.00", keys: "131.54", icon: <SellLimitIcon /> }],
  [
    { text: "Торговля", sub: true },
    { text: "Стакан цен", keys: "Alt+B", icon: <DepthIcon /> },
    { text: "Торговля в один клик", keys: "Alt+T", icon: <OneClickIcon /> },
    { text: "Список индикаторов", keys: "Ctrl+I", icon: <IndicatorListIcon /> },
  ],
  [
    { text: "Период графика", sub: true },
    { text: "Шаблон", sub: true, active: true },
    { text: "Обновить", icon: <RefreshIcon /> },
  ],
  [
    { text: "Авторазмер", keys: "Ctrl+A" },
    { text: "Сетка", keys: "Ctrl+G", icon: <GridIcon />, checked: true },
    { text: "Объемы", keys: "Ctrl+L", icon: <VolumesIcon /> },
  ],
  [
    { text: "Увеличение", keys: "+", icon: <Lens /> },
    { text: "Уменьшение", keys: "-", icon: <Lens minus /> },
  ],
  [
    { text: "Сохранить как рисунок", icon: <SavePictureIcon /> },
    { text: "Предварительный просмотр", icon: <PreviewIcon /> },
    { text: "Печать", keys: "Ctrl+P", icon: <PrintIcon /> },
  ],
  [{ text: "Свойства...", keys: "F8", icon: <PropertiesIcon /> }],
];

const TEMPLATE_GROUPS: Item[][] = [
  [
    { text: "Сохранить шаблон...", icon: <SaveTemplateIcon /> },
    { text: "Загрузить шаблон..." },
    { text: "Удалить шаблон", sub: true },
  ],
  [
    "1221", "123", "Bolivar", "BollingerBands", "Default", "Endorphin", "Layers", "Lis", "Momentum", "Pandora", "Popular",
    "Prometheus", "Shablon_forex gambit", "Stylus", "Williams", "Арбалет", "водопад", "вулкан", "Газонокосилка",
    "Для тестера стратегий", "затухание", "классика", "ЛАБОРАТОРИЯ ПРОФИТА",
  ].map((text) => ({ text, active: text === "Для тестера стратегий" })),
];

function MenuItem({ item, mark }: { item: Item; mark: string }) {
  return (
    <button
      type="button"
      role="menuitem"
      className={
        "relative flex h-[43px] w-full items-center pr-[15px] text-left " +
        (item.active ? "bg-[#d1e3f0] outline-2 -outline-offset-2 outline-[#4a9ce4]" : "")
      }
    >
      <span
        className={
          "mr-[18px] flex h-[39px] w-[42px] shrink-0 items-center justify-center " +
          (item.checked ? "border-2 border-[#4a9ce4] bg-[#cfe3f5]" : "")
        }
      >
        {item.icon}
      </span>
      <span className="flex-1 whitespace-nowrap">{item.text}</span>
      {item.keys && <span className="pr-2">{item.keys}</span>}
      {item.sub && (
        <svg viewBox="0 0 6 10" className="h-2.5 w-1.5" aria-hidden="true"><path d="M0 0l6 5-6 5z" /></svg>
      )}
      {item.active && (
        <span aria-hidden="true" className={"absolute size-[63px] rounded-full bg-[#1a34b8] " + mark} />
      )}
    </button>
  );
}

function PopupMenu({ groups, label, className, mark }: { groups: Item[][]; label: string; className: string; mark: string }) {
  return (
    <div
      role="menu"
      aria-label={label}
      className={
        "absolute border-2 border-[#7c7c7c] bg-[linear-gradient(90deg,#fff_0_2px,#f0f0f0_2px_48px,#fff_48px)] px-[3px] py-[3px] text-[21px] text-[#1b1b1b] shadow-[5px_5px_8px_rgba(0,0,0,0.55)] " +
        className
      }
    >
      {groups.map((group, g) => (
        <div key={group[0].text}>
          {g > 0 && <hr className="my-2 ml-[60px] h-px border-0 bg-[#e6e6e6]" />}
          {group.map((item) => <MenuItem key={item.text} item={item} mark={mark} />)}
        </div>
      ))}
    </div>
  );
}

export default function App() {
  return (
    <div className="relative flex h-screen flex-col overflow-hidden bg-[#f0f0f0] font-['Open_Sans','Noto_Sans',sans-serif]">
      <MenuBar />
      <MainToolbar />
      <LineToolbar />
      <Chart />
      <ChartTabs />
      <TesterPanel />
      <PopupMenu
        groups={CONTEXT_GROUPS}
        label="График"
        className="top-[370px] left-[607px] w-[481px]"
        mark="-top-2 left-[262px]"
      />
      <PopupMenu
        groups={TEMPLATE_GROUPS}
        label="Шаблон"
        className="top-[104px] left-[1078px] w-[421px]"
        mark="-top-3.5 left-[319px]"
      />
    </div>
  );
}
